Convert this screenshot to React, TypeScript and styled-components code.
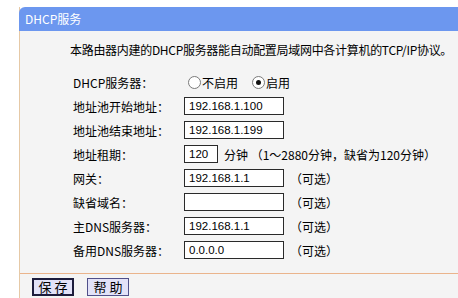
import styled, { createGlobalStyle } from "styled-components";

const GlobalStyle = createGlobalStyle`
	html, body {
		margin: 0;
		padding: 0;
		background: #ffffff;
	}
	body {
		font-family: "Noto Sans CJK SC", "Liberation Sans", sans-serif;
		font-size: 12px;
		color: #000000;
	}
`;

type Row = {
	label: string;
	value?: string;
	width?: number;
	note?: string;
};

const rows: Row[] = [
	{ label: "地址池开始地址：", value: "192.168.1.100" },
	{ label: "地址池结束地址：", value: "192.168.1.199" },
	{ label: "地址租期：", value: "120", width: 34, note: "分钟 （1～2880分钟，缺省为120分钟）" },
	{ label: "网关：", value: "192.168.1.1", note: "（可选）" },
	{ label: "缺省域名：", value: "", note: "（可选）" },
	{ label: "主DNS服务器：", value: "192.168.1.1", note: "（可选）" },
	{ label: "备用DNS服务器：", value: "0.0.0.0", note: "（可选）" },
];

function App() {
	return (
		<>
			<GlobalStyle />
			<Page>
				<Panel>
					<TitleBar>DHCP服务</TitleBar>
					<Body>
						<Intro>本路由器内建的DHCP服务器能自动配置局域网中各计算机的TCP/IP协议。</Intro>
						<Form>
							<Label>DHCP服务器：</Label>
							<Field>
								<Radio>
									<Ring />
									不启用
								</Radio>
								<Radio>
									<Ring $checked />
									启用
								</Radio>
							</Field>
							{rows.map((row) => (
								<FormRow key={row.label}>
									<Label>{row.label}</Label>
									<Field>
										<Input $width={row.width ?? 100}>{row.value}</Input>
										{row.note && <Note>{row.note}</Note>}
									</Field>
								</FormRow>
							))}
						</Form>
					</Body>
					<Footer>
						<Button $primary>保 存</Button>
						<Button>帮 助</Button>
					</Footer>
				</Panel>
			</Page>
		</>
	);
}

export default App;

const Page = styled.div`
	width: 458px;
	height: 298px;
	padding: 7px 0 0 19px;
	box-sizing: border-box;
	overflow: hidden;
`;

const Panel = styled.section`
	display: flex;
	flex-direction: column;
	border-left: 1px solid #e6c9a6;
`;

const TitleBar = styled.header`
	height: 24px;
	line-height: 24px;
	margin-left: -1px;
	padding-left: 6px;
	background-color: #6c97ef;
	border-top-left-radius: 6px;
	color: #ffffff;
	font-size: 12px;
`;

const Body = styled.div`
	background-color: #f4f4f4;
	padding: 12px 0 11px 0;
	border-bottom: 1px solid #eab48c;
`;

const Intro = styled.p`
	margin: 0 0 13px 50px;
	line-height: 14px;
	font-size: 12px;
	letter-spacing: -0.3px;
	white-space: nowrap;
`;

const Form = styled.div`
	display: grid;
	grid-template-columns: 111px auto;
	grid-auto-rows: 24px;
	margin-left: 53px;
`;

const FormRow = styled.div`
	display: contents;
`;

const Label = styled.span`
	display: flex;
	align-items: center;
	font-size: 12px;
	white-space: nowrap;
`;

const Field = styled.div`
	display: flex;
	align-items: center;
	white-space: nowrap;
`;

const Radio = styled.span`
	display: flex;
	align-items: center;
	margin-left: 4px;
	margin-right: 10px;
	font-size: 12px;
`;

const Ring = styled.span<{ $checked?: boolean }>`
	position: relative;
	width: 11px;
	height: 11px;
	border: 1px solid #7a7a7a;
	border-radius: 50%;
	background: #ffffff;
	margin-right: 1px;

	&::after {
		content: "";
		display: ${(p) => (p.$checked ? "block" : "none")};
		position: absolute;
		left: 3px;
		top: 3px;
		width: 5px;
		height: 5px;
		border-radius: 50%;
		background: #111111;
	}
`;

const Input = styled.span<{ $width: number }>`
	width: ${(p) => p.$width}px;
	height: 18px;
	box-sizing: border-box;
	border: 1px solid #2a2a2a;
	background: #ffffff;
	padding-left: 4px;
	font-family: "Liberation Sans", sans-serif;
	font-size: 11.5px;
	line-height: 16px;
`;

const Note = styled.span`
	margin-left: 6px;
	font-size: 12px;
`;

const Footer = styled.footer`
	display: flex;
	gap: 13px;
	padding: 4px 0 2px 12px;
	background-color: #f4f4f4;
`;

const Button = styled.button<{ $primary?: boolean }>`
	width: 42px;
	height: 18px;
	padding: 0;
	box-sizing: border-box;
	border: ${(p) => (p.$primary ? "2px solid #1c1c3c" : "1px solid #50508a")};
	background-color: #e2e2f8;
	font-family: "Noto Sans CJK SC", sans-serif;
	font-size: 13px;
	line-height: 14px;
	color: #000000;
	cursor: pointer;
`;
